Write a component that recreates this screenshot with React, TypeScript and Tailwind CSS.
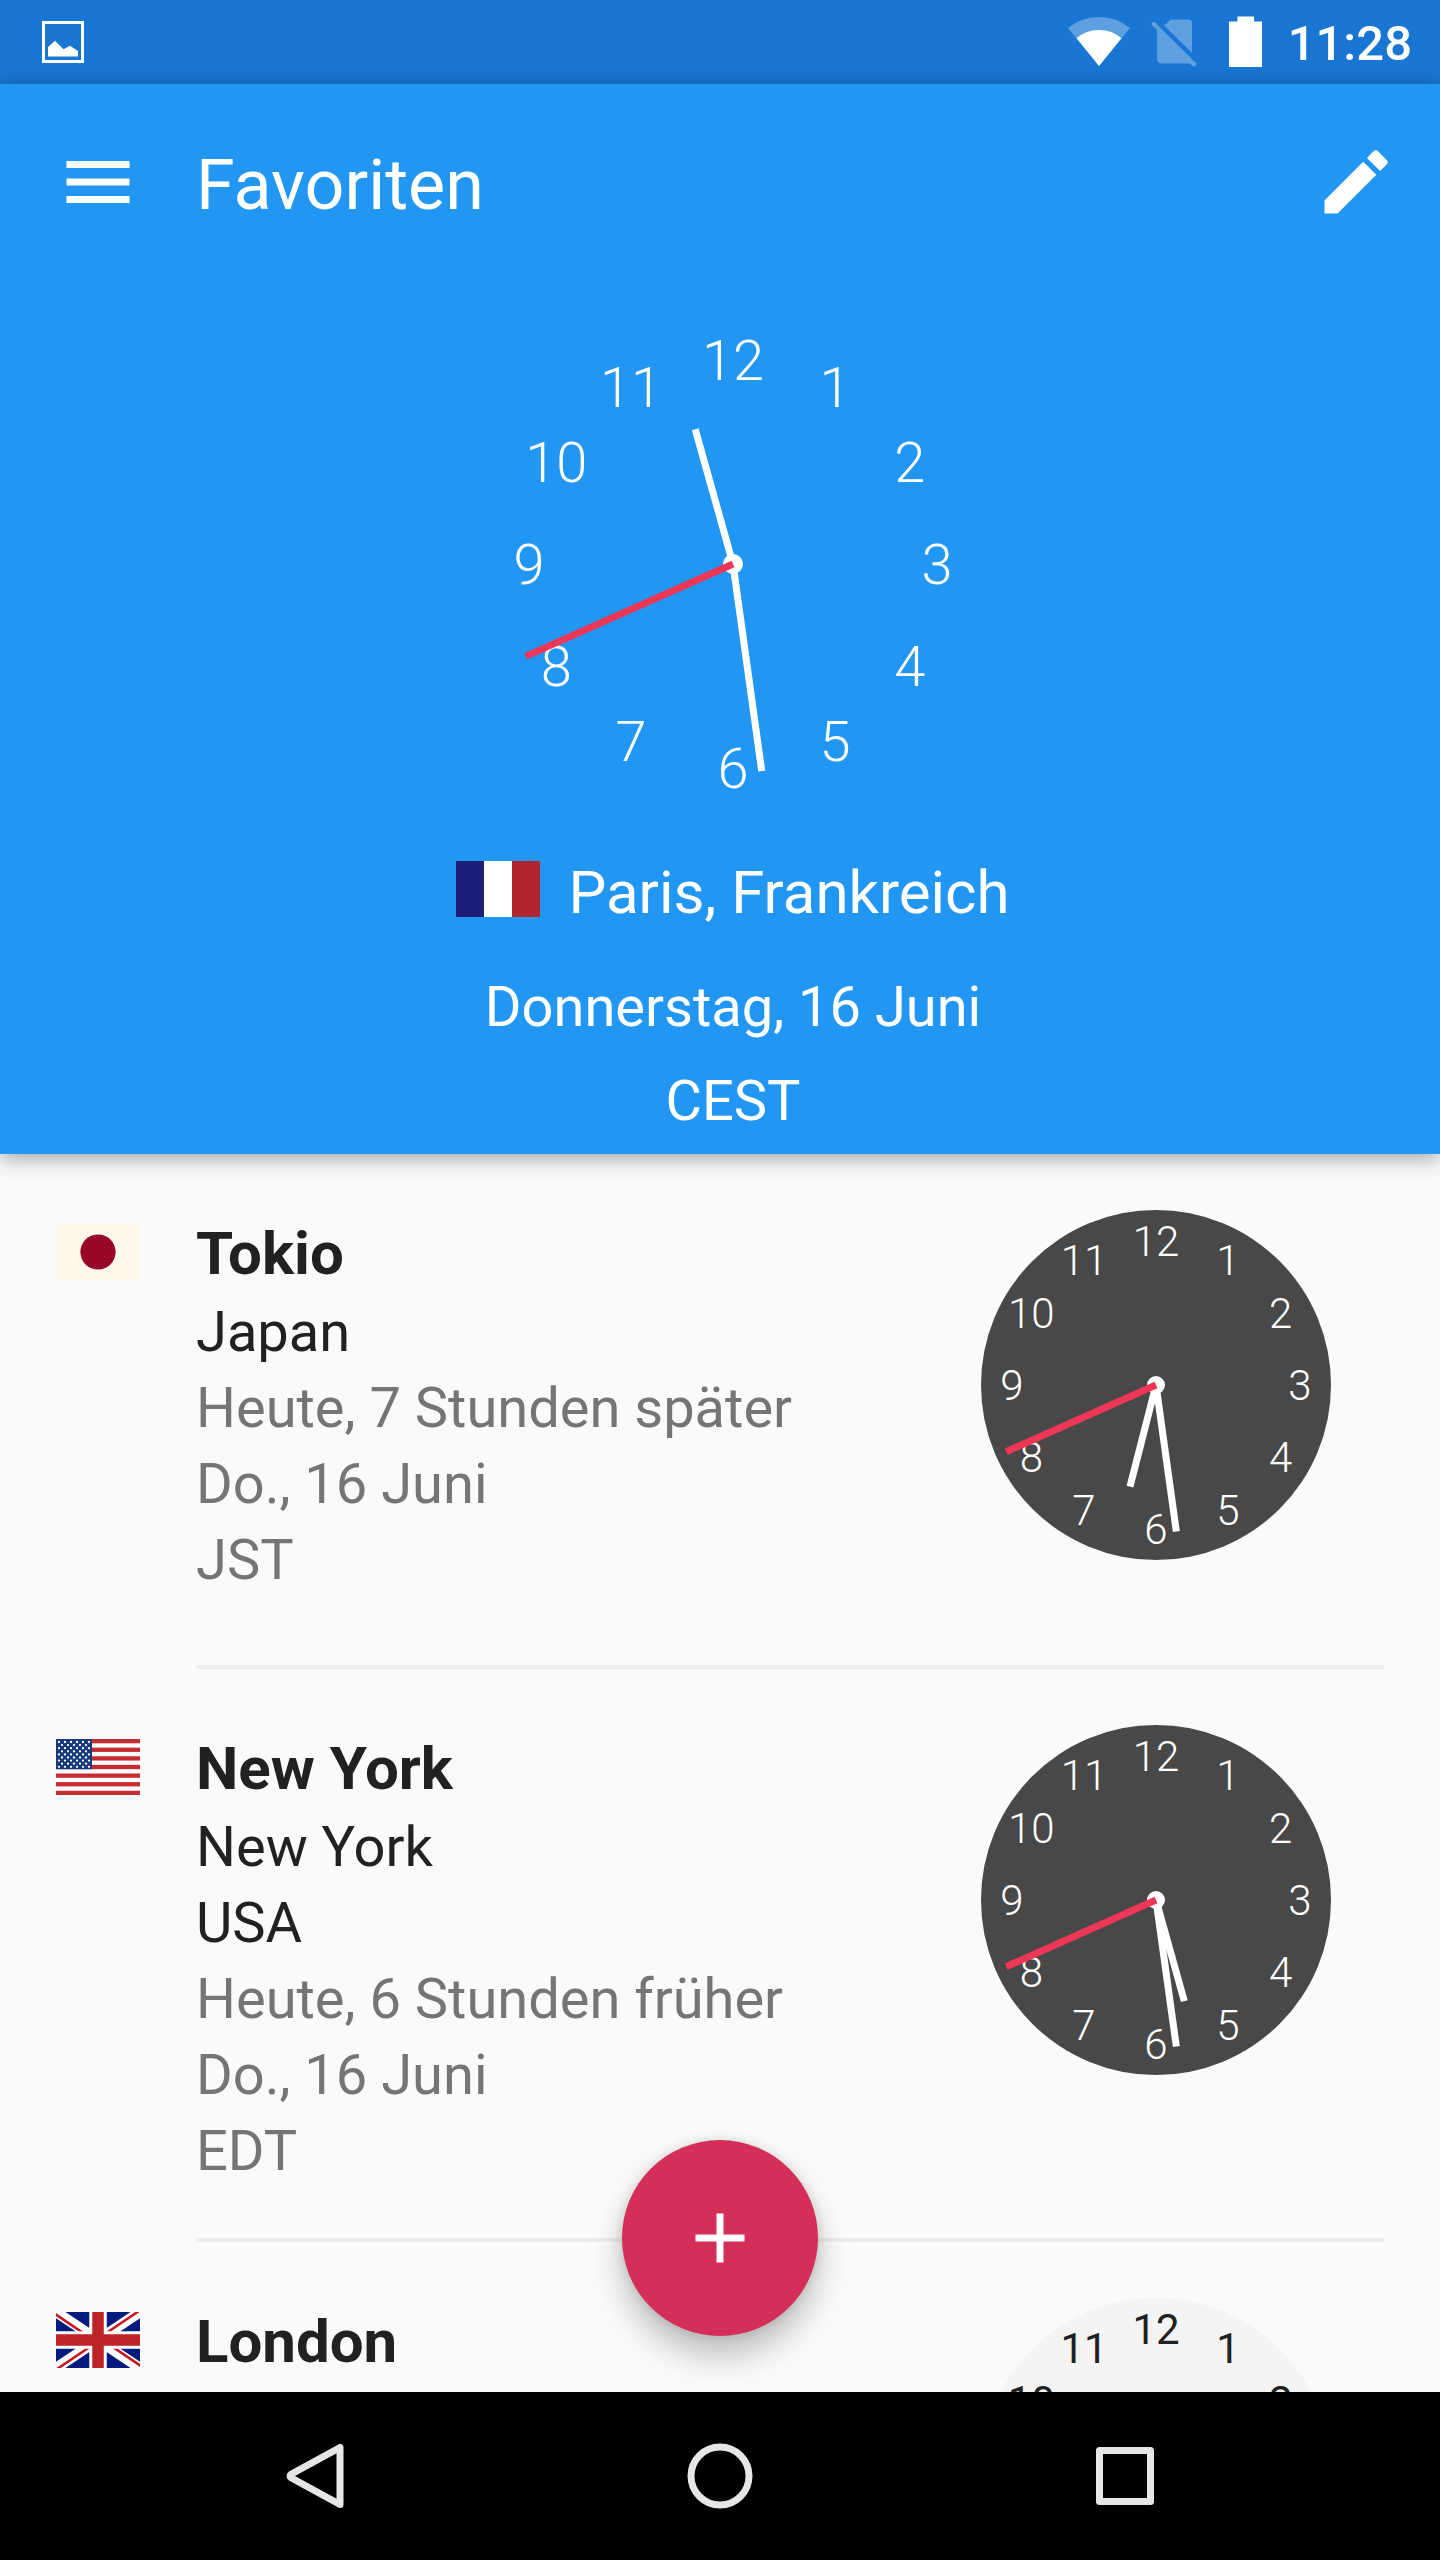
import { MdAdd, MdEdit, MdMenu } from 'react-icons/md'

type Country = 'fr' | 'jp' | 'us' | 'gb'

interface City {
  name: string
  country: Country
  place: string[]
  details: string[]
  hour: number
  night: boolean
}

const MINUTE = 28
const SECOND = 41

const cities: City[] = [
  {
    name: 'Tokio',
    country: 'jp',
    place: ['Japan'],
    details: ['Heute, 7 Stunden später', 'Do., 16 Juni', 'JST'],
    hour: 18,
    night: true,
  },
  {
    name: 'New York',
    country: 'us',
    place: ['New York', 'USA'],
    details: ['Heute, 6 Stunden früher', 'Do., 16 Juni', 'EDT'],
    hour: 5,
    night: true,
  },
  {
    name: 'London',
    country: 'gb',
    place: [],
    details: [],
    hour: 10,
    night: false,
  },
]

function Flag({ country }: { country: Country }) {
  return (
    <svg viewBox="0 0 84 56" className="w-[84px] h-14 shrink-0" aria-hidden="true">
      {country === 'fr' && (
        <>
          <rect width="28" height="56" fill="#1a1f75" />
          <rect x="28" width="28" height="56" fill="#fff" />
          <rect x="56" width="28" height="56" fill="#b3252c" />
        </>
      )}
      {country === 'jp' && (
        <>
          <rect width="84" height="56" fill="#fff8ea" />
          <circle cx="42" cy="28" r="17.6" fill="#980726" />
        </>
      )}
      {country === 'us' && (
        <>
          <rect width="84" height="56" fill="#fff" />
          {[0, 1, 2, 3, 4, 5, 6].map((i) => (
            <rect key={i} y={i * 8.62} width="84" height="4.31" fill="#c62d2f" />
          ))}
          <rect width="36" height="30.2" fill="#163a7a" />
          {[0, 1, 2, 3, 4, 5, 6, 7, 8].map((row) =>
            (row % 2 === 0 ? [0, 2, 4, 6, 8, 10] : [1, 3, 5, 7, 9]).map((col) => (
              <circle key={`${row}-${col}`} cx={3 + col * 3} cy={3 + row * 3.1} r="1.15" fill="#fff" />
            ))
          )}
        </>
      )}
      {country === 'gb' && (
        <>
          <rect width="84" height="56" fill="#001b7d" />
          <path d="M0 0L84 56M84 0L0 56" stroke="#fff" strokeWidth="10.5" />
          <path d="M-1 2L42 31M85 54L42 25M83 -1L40 28M1 57L44 28" stroke="#c4161c" strokeWidth="2.6" />
          <path d="M42 0V56M0 28H84" stroke="#fff" strokeWidth="17.5" />
          <path d="M42 0V56M0 28H84" stroke="#bd2327" strokeWidth="11.5" />
        </>
      )}
    </svg>
  )
}

interface ClockProps {
  size: number
  hour: number
  className: string
  face?: string
  ink: string
  fontSize: number
  fontWeight: number
  numberRadius: number
  hands: [number, number, number]
  hub: number
}

function Clock({ size, hour, className, face, ink, fontSize, fontWeight, numberRadius, hands, hub }: ClockProps) {
  const c = size / 2
  const minutes = MINUTE + SECOND / 60
  const angles = [(hour % 12) * 30 + minutes / 2, minutes * 6, SECOND * 6]

  const hand = (i: number, color: string) => (
    <line x1={c} y1={c} x2={c} y2={c - hands[i]} stroke={color} strokeWidth="7" transform={`rotate(${angles[i]} ${c} ${c})`} />
  )

  return (
    <svg viewBox={`0 0 ${size} ${size}`} className={className} role="img" aria-label={`${hour}:${MINUTE}`}>
      {face && <circle cx={c} cy={c} r={c} fill={face} />}
      {[1, 2, 3, 4, 5, 6, 7, 8, 9, 10, 11, 12].map((n) => {
        const a = (n * Math.PI) / 6
        return (
          <text
            key={n}
            x={c + Math.sin(a) * numberRadius}
            y={c - Math.cos(a) * numberRadius + fontSize * 0.355}
            fontSize={fontSize}
            fontWeight={fontWeight}
            textAnchor="middle"
            fill={ink}
          >
            {n}
          </text>
        )
      })}
      {hand(0, ink)}
      {hand(1, ink)}
      <circle cx={c} cy={c} r={hub} fill={ink} />
      {hand(2, '#ee3656')}
    </svg>
  )
}

function StatusBar() {
  return (
    <div className="h-[84px] shrink-0 bg-[#1976d2] flex items-center justify-between pl-[42px] pr-7">
      <svg viewBox="0 0 42 42" className="w-[42px] h-[42px]" aria-hidden="true">
        <rect x="1.5" y="1.5" width="39" height="39" fill="none" stroke="#fff" strokeWidth="3" />
        <path d="M6 35.5V26l7-6.2 8.5 8.5 6.5-3.6 8 5.3v5.5z" fill="#fff" />
      </svg>
      <div className="flex items-center">
        <svg viewBox="0 0 62 52" className="w-[62px] h-[52px] mr-[21px]" aria-hidden="true">
          <path d="M31 50L0 12Q14 1 31 1T62 12z" fill="#fff" fillOpacity="0.3" />
          <path d="M31 50L8.6 22.2Q18 14 31 14T53.4 22.2z" fill="#fff" />
        </svg>
        <svg viewBox="0 0 46 52" className="w-[46px] h-[52px] mr-8" aria-hidden="true">
          <g fill="#fff" fillOpacity="0.3">
            <path d="M13 9.5L18.5 4.8Q19.5 3.5 21 3.5H37Q41 3.5 41 7.5V37z" />
            <path d="M0 8L3 5.5L46 48L43 51L38.5 47.5H11Q6 47.5 6 43V14z" />
          </g>
        </svg>
        <svg viewBox="0 0 33 52" className="w-[33px] h-[52px] mr-[26px]" aria-hidden="true">
          <path d="M8.5 0.5H25V5.5H33V51H0V5.5H8.5z" fill="#fff" />
        </svg>
        <span className="text-[49px] leading-[56px] font-medium text-white pt-1">11:28</span>
      </div>
    </div>
  )
}

function Header() {
  return (
    <header className="relative z-10 shrink-0 bg-[#2196f3] text-white pb-1.5 shadow-[0_4px_20px_rgba(0,0,0,0.36)]">
      <div className="h-[196px] flex items-center pl-14 pr-[42px]">
        <button aria-label="Menü" className="mr-14">
          <MdMenu size={84} />
        </button>
        <h1 className="flex-1 text-[70px] leading-[84px] pt-1.5">Favoriten</h1>
        <button aria-label="Bearbeiten">
          <MdEdit size={84} />
        </button>
      </div>
      <div className="flex flex-col items-center pl-[26px] pt-[39px]">
        <Clock
          size={490}
          hour={11}
          className="w-[490px] h-[490px]"
          ink="#fff"
          fontSize={56}
          fontWeight={300}
          numberRadius={204}
          hands={[140, 209, 227]}
          hub={10}
        />
        <div className="flex items-start gap-7 mt-[52px]">
          <Flag country="fr" />
          <h2 className="text-[60px] leading-[64px]">Paris, Frankreich</h2>
        </div>
        <div className="mt-[35px] text-[56px] leading-[94px] text-center">
          <p>Donnerstag, 16 Juni</p>
          <p>CEST</p>
        </div>
      </div>
    </header>
  )
}

function CityRow({ city }: { city: City }) {
  return (
    <li>
      <div className="flex items-start pt-14 pb-[49px] pl-14 pr-[109px]">
        <div className="pt-3.5 mr-14">
          <Flag country={city.country} />
        </div>
        <div className="flex-1 pt-1 text-[56px] leading-[76px]">
          <h3 className="text-[60px] leading-[80px] font-bold text-[#212121]">{city.name}</h3>
          {city.place.map((line) => (
            <p key={line} className="text-[#212121]">{line}</p>
          ))}
          {city.details.map((line) => (
            <p key={line} className="text-[#757575]">{line}</p>
          ))}
        </div>
        <Clock
          size={350}
          hour={city.hour}
          className="w-[350px] h-[350px] shrink-0 mb-14"
          face={city.night ? '#484848' : '#f4f4f4'}
          ink={city.night ? '#fff' : '#212121'}
          fontSize={42}
          fontWeight={city.night ? 300 : 400}
          numberRadius={144}
          hands={[105, 148, 164]}
          hub={9}
        />
      </div>
      <div className="h-1 ml-[196px] mr-14 bg-[#eeeeee]" />
    </li>
  )
}

function NavigationBar() {
  return (
    <nav className="h-[168px] shrink-0 bg-black grid grid-cols-3 items-center justify-items-center px-28">
      <button aria-label="Zurück">
        <svg viewBox="0 0 66 66" className="w-[66px] h-[66px]" fill="none" stroke="#e6e6e6" strokeWidth="7" strokeLinejoin="round">
          <path d="M58 4.5V61.5L9.5 35Q6.5 33 9.5 31z" />
        </svg>
      </button>
      <button aria-label="Startseite">
        <svg viewBox="0 0 66 66" className="w-[66px] h-[66px]" fill="none" stroke="#e6e6e6" strokeWidth="7">
          <circle cx="33" cy="33" r="29" />
        </svg>
      </button>
      <button aria-label="Übersicht">
        <svg viewBox="0 0 66 66" className="w-[66px] h-[66px]" fill="none" stroke="#e6e6e6" strokeWidth="7" strokeLinejoin="round">
          <rect x="7.5" y="7.5" width="51" height="51" />
        </svg>
      </button>
    </nav>
  )
}

export default function App() {
  return (
    <div className="h-screen flex flex-col bg-[#fafafa] font-['Roboto',sans-serif]">
      <StatusBar />
      <Header />
      <main className="relative flex-1 min-h-0 overflow-hidden">
        <ul>
          {cities.map((city) => (
            <CityRow key={city.name} city={city} />
          ))}
        </ul>
        <button
          aria-label="Ort hinzufügen"
          className="absolute bottom-14 left-1/2 -translate-x-1/2 w-[196px] h-[196px] rounded-full bg-[#d32f59] text-white flex items-center justify-center shadow-[0_20px_32px_rgba(0,0,0,0.24),0_0_12px_rgba(0,0,0,0.12)]"
        >
          <MdAdd size={84} />
        </button>
      </main>
      <NavigationBar />
    </div>
  )
}
